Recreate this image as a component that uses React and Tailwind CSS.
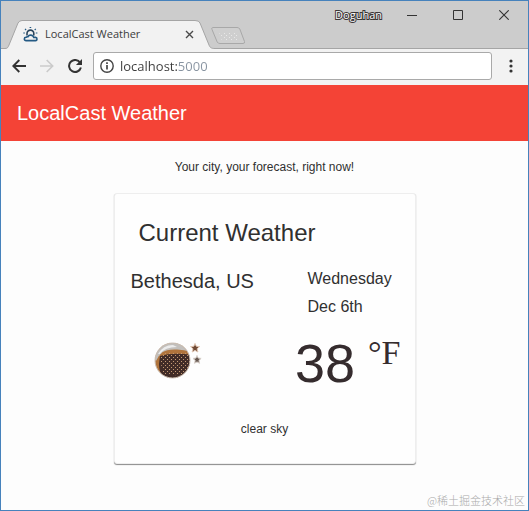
function WeatherLogo() {
  return (
    <svg width="15" height="15" viewBox="0 0 15 15" fill="none" stroke="#245a84" aria-hidden="true">
      <path d="M4 8.500V6.500a3.400 3.400 0 0 1 6.800 0v2" stroke="#28445c" strokeWidth="1.600" />
      <path d="M6.600.3h1.600M2 1.900l1.100 1.100M12.800 1.900l-1.100 1.100M.3 6h1.600M12.800 6h1.600" strokeWidth="1.200" />
      <path
        d="M3 13.600h9.300a1.600 1.600 0 0 0 .2-3.200h-1.700a3.300 3.300 0 0 0-6-.6A2 2 0 0 0 3 10.300a1.600 1.600 0 0 0 0 3.300z"
        fill="#f2f2f2"
        strokeWidth="1.600"
      />
    </svg>
  );
}

function TabStrip() {
  return (
    <div className="flex h-[47px] items-end justify-between bg-[#cccccc]">
      <div className="flex items-end">
        <div className="relative ml-1 h-7 w-[210px]">
          <svg className="absolute left-0 top-0" width="210" height="29" viewBox="0 0 210 29" aria-hidden="true">
            <path
              d="M0 28.500C3 28.500 3 27 4 25L13 3Q14.500 .5 17 .5H190Q194 .5 195 3L204 25C205 27.500 206 28.500 210 28.500V29H0Z"
              fill="#f2f2f2"
            />
            <path
              d="M0 28.500C3 28.500 3 27 4 25L13 3Q14.500 .5 17 .5H190Q194 .5 195 3L204 25C205 27.500 206 28.500 210 28.500"
              fill="none"
              stroke="#a5a5a5"
            />
          </svg>
          <div className="relative flex h-full items-center pl-[18px] pr-[20px]">
            <WeatherLogo />
            <span className="ml-[7px] flex-1 whitespace-nowrap text-[11px] leading-4 text-[#3c3c3c]">
              LocalCast Weather
            </span>
            <button type="button" aria-label="Close tab" className="flex size-3 items-center justify-center">
              <svg width="9" height="9" viewBox="0 0 9 9" stroke="#4a4a4a" strokeWidth="1.400" aria-hidden="true">
                <path d="M1 1l7 7M8 1l-7 7" />
              </svg>
            </button>
          </div>
        </div>
        <button type="button" aria-label="New tab" className="-ml-1 mb-1">
          <svg width="35" height="17" viewBox="0 0 35 17" aria-hidden="true">
            <defs>
              <pattern id="speckle" width="5" height="4" patternUnits="userSpaceOnUse">
                <path d="M0 0h1v1H0zM3 2h1v1H3z" fill="#e8e8e8" />
              </pattern>
            </defs>
            <path
              d="M1.500.5H26Q28 .5 28.800 2L33.500 14.500Q34 16.500 32 16.500H9Q7 16.500 6.200 15L1 2.500Q.4 .5 1.500 .5Z"
              fill="#cfcfcf"
              stroke="#a8a8a8"
            />
            <path d="M8 5H25L28 14H11Z" fill="url(#speckle)" />
          </svg>
        </button>
      </div>
      <div className="flex h-7 items-center self-start pr-[19px]">
        <button
          type="button"
          className="mr-[25px] text-[11px] leading-4 text-white [paint-order:stroke_fill] [-webkit-text-stroke:2px_#3a3637]"
        >
          Doguhan
        </button>
        <div className="flex gap-9">
          <button type="button" aria-label="Minimize">
            <svg width="10" height="10" viewBox="0 0 10 10" stroke="#333" aria-hidden="true">
              <path d="M0 5.500h10" />
            </svg>
          </button>
          <button type="button" aria-label="Maximize">
            <svg width="10" height="10" viewBox="0 0 10 10" fill="none" stroke="#333" aria-hidden="true">
              <path d="M.5.5h9v9h-9z" />
            </svg>
          </button>
          <button type="button" aria-label="Close window">
            <svg width="10" height="10" viewBox="0 0 10 10" stroke="#333" strokeWidth="1.100" aria-hidden="true">
              <path d="M.3.3l9.400 9.400M9.700.3L.3 9.700" />
            </svg>
          </button>
        </div>
      </div>
    </div>
  );
}

function Toolbar() {
  return (
    <div className="flex h-[37px] items-center border-t border-[#a5a5a5] bg-[#f2f2f2] pb-[2px] pl-[11px] pr-[15px]">
      <button type="button" aria-label="Back">
        <svg width="14" height="14" viewBox="0 0 14 14" fill="none" stroke="#333" strokeWidth="1.900" aria-hidden="true">
          <path d="M14 7H1.500M7.300 1L1.300 7l6 6" />
        </svg>
      </button>
      <button type="button" aria-label="Forward" className="ml-[14px]">
        <svg width="14" height="14" viewBox="0 0 14 14" fill="none" stroke="#cbcbcb" strokeWidth="1.600" aria-hidden="true">
          <path d="M0 7h12.500M6.700 1l6 6-6 6" />
        </svg>
      </button>
      <button type="button" aria-label="Reload" className="ml-[14px]">
        <svg width="15" height="14" viewBox="0 0 15 14" fill="none" aria-hidden="true">
          <path d="M12.200 3.800A6 6 0 1 0 12.900 8.500" stroke="#333" strokeWidth="2" />
          <path d="M14 0v6.100H7.900z" fill="#333" />
        </svg>
      </button>
      <div className="ml-[10px] flex h-7 min-w-0 flex-1 items-center rounded-[3px] border border-[#a9a9a9] bg-white pl-[6px]">
        <svg width="14" height="14" viewBox="0 0 14 14" fill="none" stroke="#444" aria-hidden="true">
          <circle cx="7" cy="7" r="6.200" strokeWidth="1.400" />
          <path d="M7 6v4.500M7 3.300v1.600" strokeWidth="1.700" />
        </svg>
        <input
          type="text"
          aria-label="Address"
          defaultValue="localhost:5000"
          className="ml-1 h-6 min-w-0 flex-1 bg-[linear-gradient(90deg,#3c3c3c_60px,#8793a0_60px)] bg-clip-text px-[2px] text-[13px] leading-5 text-transparent outline-none"
        />
      </div>
      <button type="button" aria-label="Menu" className="ml-[17px]">
        <svg width="4" height="14" viewBox="0 0 4 14" fill="#333" aria-hidden="true">
          <circle cx="2" cy="2" r="1.600" />
          <circle cx="2" cy="7" r="1.600" />
          <circle cx="2" cy="12" r="1.600" />
        </svg>
      </button>
    </div>
  );
}

function MoonIcon() {
  return (
    <svg width="50" height="38" viewBox="0 0 50 38" role="img" aria-label="Clear night">
      <defs>
        <clipPath id="disc">
          <circle cx="19.500" cy="19.500" r="17.500" />
        </clipPath>
        <pattern id="dither" width="4" height="4" patternUnits="userSpaceOnUse">
          <path d="M0 0h1v1H0zM2 2h1v1H2z" fill="#c49a74" />
        </pattern>
      </defs>
      <g clipPath="url(#disc)">
        <path d="M0 0h40v40H0z" fill="#b0743c" />
        <path d="M7 15Q20 11 40 14V40H14Q6 34 6 23Z" fill="#412c27" />
        <path d="M6 13Q20 10 40 13V32Q30 36 10 33Z" fill="url(#dither)" />
        <path d="M0 18V0H40V12Q34 9 24 8.500Q14 8 9 11.500Q5 15 3 20Z" fill="#c2bfbc" />
        <path d="M5 13Q10 4 20 4L24 6Q12 6 7 13Z" fill="#ececec" />
      </g>
      <circle cx="19.500" cy="19.500" r="17.500" fill="none" stroke="#cbbfb5" />
      <path d="M42 2.500l1.300 2.800 3.200.3-2.400 2.200.8 3.200-2.900-1.600-2.800 1.600.8-3.200-2.400-2.200 3.200-.3z" fill="#704a35" stroke="#e0c6b4" />
      <path d="M44 14.500l1.200 2.600 2.900.3-2.200 2 .7 2.900-2.600-1.400-2.500 1.400.7-2.900-2.200-2 2.900-.3z" fill="#675850" stroke="#d9d1cb" />
    </svg>
  );
}

function WeatherCard() {
  return (
    <section className="mx-auto mt-4 w-full max-w-[302px] rounded-[3px] border border-[#eeeeee] bg-[#fefefe] pb-6 pt-[23px] shadow-[0_1px_1px_#8a8a8a]">
      <h2 className="px-6 text-[24px] leading-8">Current Weather</h2>
      <div className="mt-4 flex justify-between px-4">
        <h3 className="pt-[2px] text-[20px] leading-7">Bethesda, US</h3>
        <p className="w-[91px] text-[16px] leading-7">
          Wednesday
          <br />
          Dec 6th
        </p>
      </div>
      <div className="mt-[14px] flex items-start justify-between pl-[38px] pr-[14px]">
        <div className="pt-[6px]">
          <MoonIcon />
        </div>
        <p className="flex items-start text-[#352c2e]">
          <span className="text-[54px] leading-[56px]">38</span>
          <span className="ml-[13px] pt-[2px] font-['Liberation_Serif',serif] text-[34px] leading-8">°F</span>
        </p>
      </div>
      <p className="mt-7 text-center text-[12px] leading-5">clear sky</p>
    </section>
  );
}

export default function App() {
  return (
    <div className="flex min-h-screen flex-col border border-[#4682bc] bg-[#fdfdfd] font-['Liberation_Sans',Arial,sans-serif] text-[#303030]">
      <header className="font-['Open_Sans','Noto_Sans',sans-serif]">
        <TabStrip />
        <Toolbar />
      </header>
      <div className="flex h-14 items-center bg-[#f44336] px-4">
        <h1 className="text-[20px] leading-6 text-white">LocalCast Weather</h1>
      </div>
      <main className="flex-1 px-4">
        <p className="mt-4 text-center text-[12px] leading-5">Your city, your forecast, right now!</p>
        <WeatherCard />
      </main>
      <footer className="px-[3px] pb-[2px] text-right font-['Noto_Sans_CJK_SC',sans-serif] text-[11px] font-light leading-4 text-[#aaaaaa]">
        @稀土掘金技术社区
      </footer>
    </div>
  );
}
